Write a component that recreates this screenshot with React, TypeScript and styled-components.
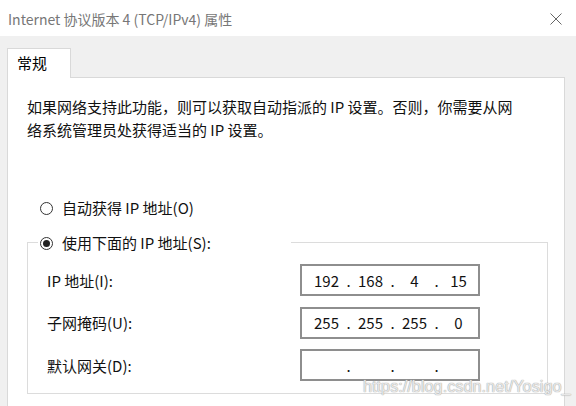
import React from 'react';
import styled, { createGlobalStyle } from 'styled-components';

const GlobalStyle = createGlobalStyle`
  html, body {
    margin: 0;
    padding: 0;
    background: #f0f0f0;
  }
  body {
    font-family: "Noto Sans CJK SC", "Noto Sans", sans-serif;
    font-size: 15px;
    color: #000;
  }
`;

const Window = styled.div`
  width: 576px;
  height: 406px;
  overflow: hidden;
  position: relative;
  background: #f0f0f0;
`;

const TitleBar = styled.div`
  height: 36px;
  background: #fff;
  display: flex;
  align-items: center;
  justify-content: space-between;
  padding: 0 14px 0 8px;
`;

const Title = styled.span`
  font-size: 14px;
  color: #777;
  line-height: 20px;
  margin-top: 2px;
`;

const CloseButton = styled.button`
  border: none;
  background: none;
  padding: 0;
  width: 12px;
  height: 12px;
  display: flex;
  margin-top: 1px;
`;

const Body = styled.div`
  padding: 12px 11px 0 7px;
`;

const TabStrip = styled.div`
  display: flex;
`;

const Tab = styled.div`
  width: 64px;
  height: 30px;
  box-sizing: border-box;
  background: #fff;
  border: 1px solid #d9d9d9;
  border-bottom: none;
  margin-bottom: -1px;
  position: relative;
  z-index: 1;
  padding-left: 9px;
  line-height: 28px;
`;

const Panel = styled.div`
  background: #fff;
  border: 1px solid #d9d9d9;
  height: 340px;
  padding: 17px 0 0 19px;
`;

const Paragraph = styled.p`
  margin: 0;
  line-height: 23px;
  color: #111;
`;

const RadioRow = styled.label`
  display: flex;
  align-items: center;
  height: 20px;
  gap: 9px;
  color: #111;
`;

const FirstRadio = styled(RadioRow)`
  margin: 56px 0 0 13px;
`;

const RadioDot = styled.span<{ $checked?: boolean }>`
  width: 13px;
  height: 13px;
  box-sizing: border-box;
  border: 1.3px solid #333;
  border-radius: 50%;
  display: flex;
  align-items: center;
  justify-content: center;
  margin-top: 2px;

  &::after {
    content: '';
    display: ${p => (p.$checked ? 'block' : 'none')};
    width: 7px;
    height: 7px;
    border-radius: 50%;
    background: #222;
  }
`;

const Group = styled.fieldset`
  margin: 15px 0 0 0;
  width: 521px;
  box-sizing: border-box;
  border: 1px solid #dcdcdc;
  padding: 0 0 12px 10px;
`;

const Legend = styled.legend`
  width: 253px;
  box-sizing: border-box;
  padding: 0 0 0 2px;
`;

const Fields = styled.div`
  display: grid;
  grid-template-columns: 253px 180px;
  row-gap: 10.5px;
  align-items: center;
  margin-top: 12px;
  padding-left: 9px;
`;

const FieldLabel = styled.span`
  color: #111;
`;

const IpBox = styled.div`
  height: 32px;
  box-sizing: border-box;
  border: 2px solid #8e8e8e;
  display: flex;
  align-items: center;
  padding-left: 6px;
`;

const Octet = styled.span`
  width: 37px;
  text-align: center;
  color: #111;
`;

const Dot = styled.span`
  width: 7px;
  text-align: center;
  color: #111;
`;

const Watermark = styled.div`
  position: absolute;
  left: 363px;
  top: 377px;
  font-family: "Liberation Sans", Arial, sans-serif;
  font-size: 16.3px;
  color: rgba(255, 255, 255, 0.75);
  text-shadow: 0 0 1px #9c9c9c, 0 0 1px #b0b0b0;
  pointer-events: none;
`;

const IpField = ({ parts }: { parts: string[] }) => (
  <IpBox>
    {parts.map((p, i) => (
      <React.Fragment key={i}>
        <Octet>{p}</Octet>
        {i < 3 && <Dot>.</Dot>}
      </React.Fragment>
    ))}
  </IpBox>
);

const App = () => (
  <Window>
    <GlobalStyle />
    <TitleBar>
      <Title>Internet 协议版本 4 (TCP/IPv4) 属性</Title>
      <CloseButton aria-label="关闭">
        <svg width="12" height="12" viewBox="0 0 12 12">
          <path d="M0.5 0.5 L11.5 11.5 M11.5 0.5 L0.5 11.5" stroke="#666" strokeWidth="1" fill="none" />
        </svg>
      </CloseButton>
    </TitleBar>
    <Body>
      <TabStrip>
        <Tab>常规</Tab>
      </TabStrip>
      <Panel>
        <Paragraph>
          如果网络支持此功能，则可以获取自动指派的 IP 设置。否则，你需要从网
          <br />
          络系统管理员处获得适当的 IP 设置。
        </Paragraph>
        <FirstRadio>
          <RadioDot />
          自动获得 IP 地址(O)
        </FirstRadio>
        <Group>
          <Legend>
            <RadioRow>
              <RadioDot $checked />
              使用下面的 IP 地址(S):
            </RadioRow>
          </Legend>
          <Fields>
            <FieldLabel>IP 地址(I):</FieldLabel>
            <IpField parts={['192', '168', '4', '15']} />
            <FieldLabel>子网掩码(U):</FieldLabel>
            <IpField parts={['255', '255', '255', '0']} />
            <FieldLabel>默认网关(D):</FieldLabel>
            <IpField parts={['', '', '', '']} />
          </Fields>
        </Group>
      </Panel>
    </Body>
    <Watermark>https://blog.csdn.net/Yosigo_</Watermark>
  </Window>
);

export default App;
